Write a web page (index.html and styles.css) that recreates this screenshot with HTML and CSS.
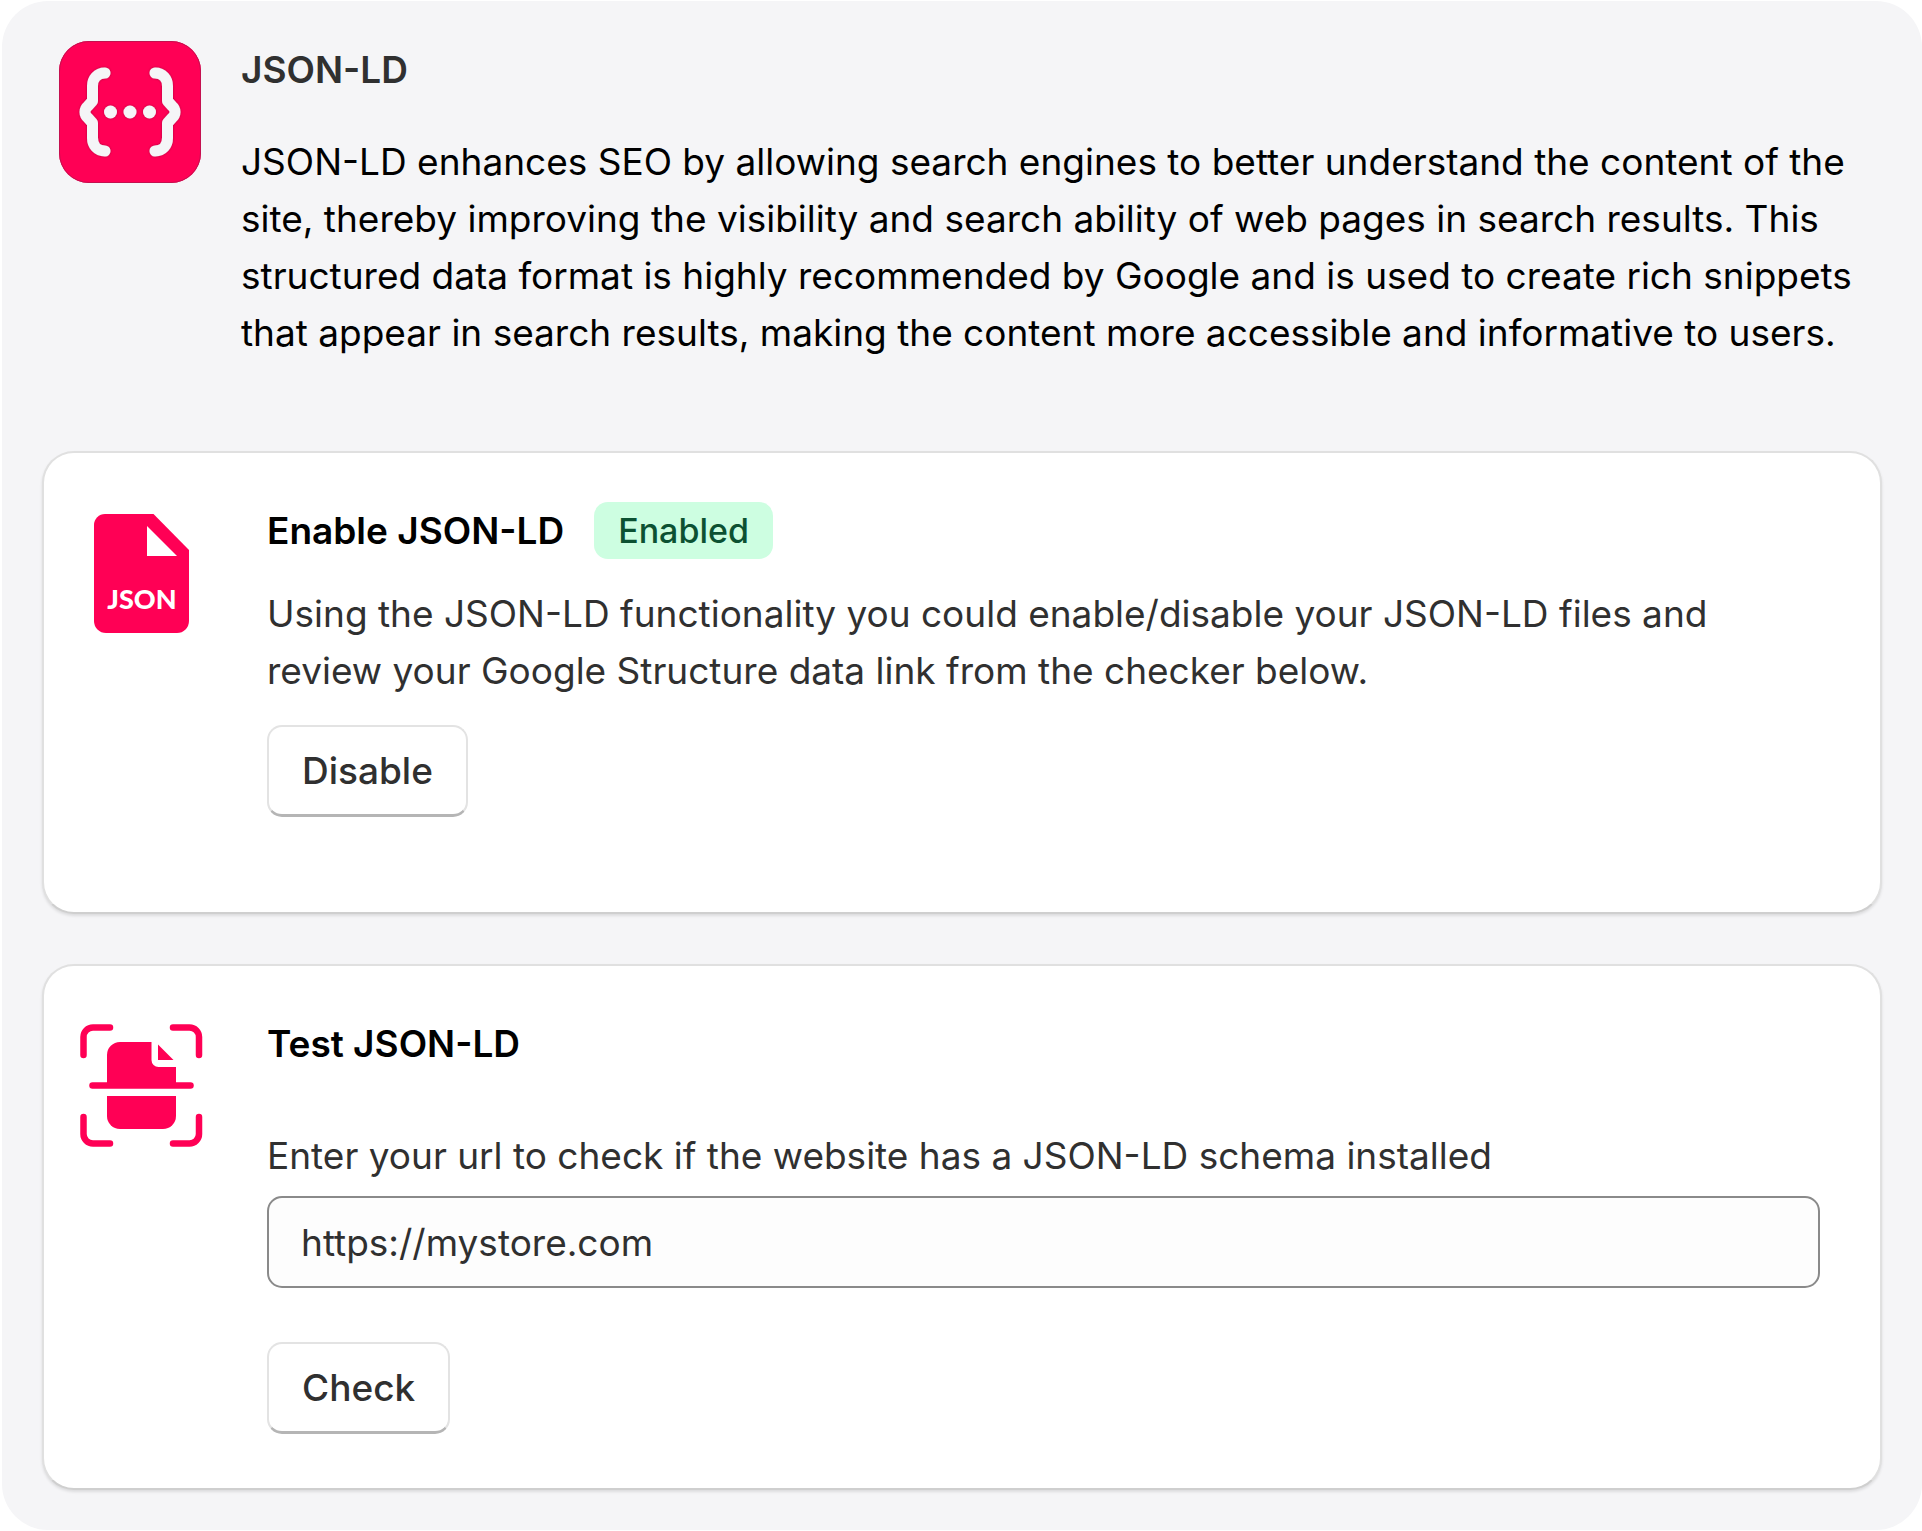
FILE: index.html
```html
<!DOCTYPE html>
<html lang="en">
<head>
<meta charset="utf-8">
<meta name="viewport" content="width=device-width, initial-scale=1">
<title>JSON-LD</title>
<link rel="stylesheet" href="styles.css">
</head>
<body>
<main class="panel">
  <header class="intro">
    <svg class="intro-logo" viewBox="0 0 142 142" aria-hidden="true">
      <defs>
        <filter id="edge" x="-20%" y="-20%" width="140%" height="140%">
          <feDropShadow dx="0" dy="0" stdDeviation="1" flood-color="#8a0030" flood-opacity="0.7"/>
        </filter>
      </defs>
      <rect width="142" height="142" rx="30" fill="#ff0055"/>
      <rect x="0.5" y="0.5" width="141" height="141" rx="29.500" fill="none" stroke="#c4104f" stroke-width="1"/>
      <g filter="url(#edge)">
        <g fill="none" stroke="#f5f5f7" stroke-width="11" stroke-linecap="round" stroke-linejoin="round">
          <path d="M46 32C38 32 33.500 38 33.500 45V60L29 65Q26 67.500 26 71Q26 74.500 29 77L33.500 82V97C33.500 104 38 110 46 110"/>
          <path d="M96 32C104 32 108.500 38 108.500 45V60L113 65Q116 67.500 116 71Q116 74.500 113 77L108.500 82V97C108.500 104 104 110 96 110"/>
        </g>
        <g fill="#f5f5f7">
          <circle cx="51.500" cy="71" r="6.500"/>
          <circle cx="71" cy="71" r="6.500"/>
          <circle cx="90.500" cy="71" r="6.500"/>
        </g>
      </g>
    </svg>
    <div class="intro-body">
      <h1 class="title intro-title">JSON-LD</h1>
      <p class="intro-text">JSON-LD enhances SEO by allowing search engines to better understand the content of the site, thereby improving the visibility and search ability of web pages in search results. This structured data format is highly recommended by Google and is used to create rich snippets that appear in search results, making the content more accessible and informative to users.</p>
    </div>
  </header>

  <section class="card card-enable">
    <svg class="card-icon" viewBox="0 0 124 124" aria-hidden="true">
      <path d="M25 3H73.500L109 39V110A12 12 0 0 1 97 122H26A12 12 0 0 1 14 110V14A11 11 0 0 1 25 3Z" fill="#ff0055"/>
      <path d="M67 15V45H97Z" fill="#fff"/>
      <text class="file-label" x="62" y="98" text-anchor="middle">JSON</text>
    </svg>
    <div class="card-body">
      <div class="card-head">
        <h2 class="title">Enable JSON-LD</h2>
        <span class="badge">Enabled</span>
      </div>
      <p class="card-text">Using the JSON-LD functionality you could enable/disable your JSON-LD files and review your Google Structure data link from the checker below.</p>
      <button class="button" type="button">Disable</button>
    </div>
  </section>

  <section class="card card-test">
    <svg class="card-icon" viewBox="0 0 124 124" aria-hidden="true">
      <g fill="none" stroke="#ff0055" stroke-width="6.500" stroke-linecap="round">
        <path d="M3.500 31V13A9.500 9.500 0 0 1 13 3.500H30"/>
        <path d="M93 3.500H109.500A9.500 9.500 0 0 1 119 13V31"/>
        <path d="M119 93V110A9.500 9.500 0 0 1 109.500 119.500H93"/>
        <path d="M30 119.500H13A9.500 9.500 0 0 1 3.500 110V93"/>
        <path d="M12.500 61.500H110.500"/>
      </g>
      <g fill="#ff0055">
        <path d="M27 61V31A13 13 0 0 1 40 18H71.500V36A7 7 0 0 0 78.500 43H96V61Z"/>
        <path d="M78 20.500L93.500 36H78Z"/>
        <path d="M27 72H96V92A13 13 0 0 1 83 105H40A13 13 0 0 1 27 92Z"/>
      </g>
    </svg>
    <form class="card-body">
      <h2 class="title">Test JSON-LD</h2>
      <label class="card-label" for="store-url">Enter your url to check if the website has a JSON-LD schema installed</label>
      <input class="field" id="store-url" type="text" value="https://mystore.com">
      <button class="button" type="button">Check</button>
    </form>
  </section>
</main>
</body>
</html>
```
FILE: styles.css
```css
*,
*::before,
*::after {
  box-sizing: border-box;
}

body {
  margin: 0;
  padding: 1px 0 0 2px;
  background: #fff;
  color: #303030;
  font-family: Inter, "Liberation Sans", sans-serif;
  font-size: 37px;
  line-height: 57px;
}

h1,
h2,
p {
  margin: 0;
}

.panel {
  padding: 40px;
  background: #f5f5f7;
  border-radius: 46px;
}

.intro {
  display: flex;
  gap: 40px;
  padding: 0 14px 0 17px;
  margin-bottom: 90px;
}

.intro-logo {
  flex: none;
  width: 142px;
  height: 142px;
}

.intro-body {
  flex: 1;
}

.title {
  color: #000;
  font-size: 37px;
  font-weight: 600;
}

.intro-title {
  margin-bottom: 35px;
  color: #303030;
}

.intro-text {
  color: #000;
}

.card {
  display: flex;
  gap: 63px;
  padding: 49px 60px 54px 36px;
  background: #fff;
  border: 2px solid #e0e0e0;
  border-bottom-color: #cfcfcf;
  border-radius: 32px;
  box-shadow: 0 2px 3px rgba(0, 0, 0, 0.1);
}

.card-enable {
  padding-bottom: 95px;
  margin-bottom: 50px;
}

.card-icon {
  flex: none;
  width: 124px;
  height: 124px;
  margin-top: 9px;
}

.file-label {
  fill: #fff;
  font-family: Lato, sans-serif;
  font-size: 27px;
  font-weight: 900;
}

.card-body {
  display: flex;
  flex: 1;
  flex-direction: column;
  align-items: flex-start;
}

.card-head {
  display: flex;
  align-items: center;
  gap: 30px;
  margin-bottom: 26px;
}

.badge {
  padding: 0 24px;
  border-radius: 14px;
  background: #cdfee1;
  color: #0c5132;
  font-size: 34px;
  font-weight: 500;
}

.card-text {
  margin-bottom: 26px;
}

.card-label {
  margin: 55px 0 12px;
}

.field {
  width: 100%;
  height: 92px;
  padding: 0 32px;
  margin-bottom: 54px;
  border: 2px solid #8a8a8a;
  border-radius: 15px;
  background: #fdfdfd;
  color: #303030;
  font: inherit;
}

.button {
  height: 92px;
  padding: 0 33px;
  border: 2px solid #e3e3e3;
  border-bottom: 3px solid #b5b5b5;
  border-radius: 15px;
  background: #fff;
  color: #303030;
  font: inherit;
  font-weight: 500;
}
```
